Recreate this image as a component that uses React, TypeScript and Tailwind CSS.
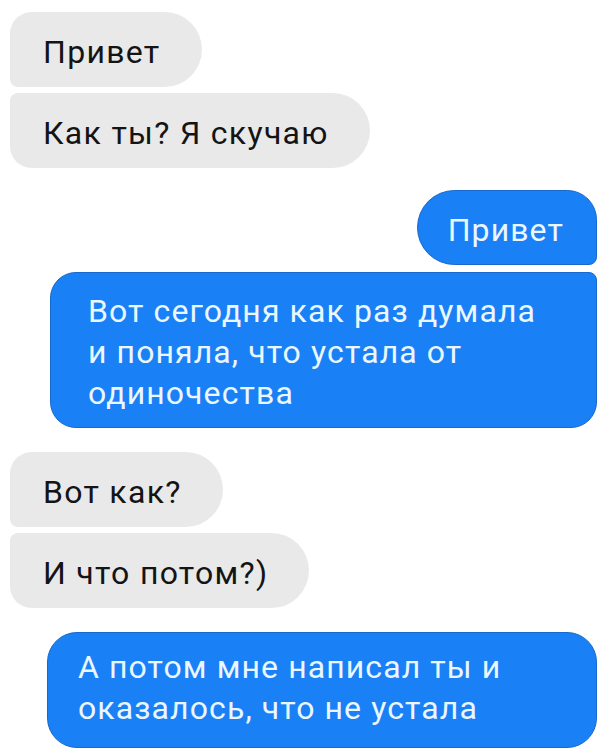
import * as React from "react";

function Incoming({ text, className }: { text: string; className: string }) {
    return (
        <div
            className={`flex h-[75px] w-fit items-center bg-[#e9e9e9] pt-[5px] pl-[33px] pr-[41px] text-[32px] tracking-[1.3px] text-[#141414] ${className}`}
        >
            {text}
        </div>
    );
}

export default function App() {
    return (
        <div className="flex h-[751px] w-[601px] flex-col bg-white px-[10px] pt-[12px] font-['Roboto',sans-serif] leading-none">
            <Incoming text="Привет" className="rounded-l-[22px] rounded-bl-[8px] rounded-r-[38px]" />
            <Incoming
                text="Как ты? Я скучаю"
                className="mt-[6px] rounded-l-[22px] rounded-tl-[8px] rounded-r-[38px]"
            />

            <div className="mt-[22px] mr-[-6px] flex h-[75px] w-fit items-center self-end rounded-l-[38px] rounded-tr-[30px] rounded-br-[8px] border border-[#1769cc] bg-[#1a80f6] pt-[4px] pl-[30px] pr-[32px] text-[32px] tracking-[1.1px] text-[#eaf7ff]">
                Привет
            </div>
            <div className="mt-[7px] mr-[-6px] ml-[40px] flex flex-col rounded-[26px] rounded-tr-[8px] border border-[#1769cc] bg-[#1a80f6] pt-[18px] pb-[13px] pl-[37px] pr-[20px] text-[32px] leading-[41px] tracking-[1.1px] text-[#eaf7ff]">
                <span>Вот сегодня как раз думала</span>
                <span>и поняла, что устала от</span>
                <span>одиночества</span>
            </div>

            <Incoming
                text="Вот как?"
                className="mt-[24px] rounded-l-[22px] rounded-bl-[8px] rounded-r-[38px]"
            />
            <Incoming
                text="И что потом?)"
                className="mt-[6px] rounded-l-[22px] rounded-tl-[8px] rounded-r-[38px]"
            />

            <div className="mt-[24px] mr-[-6px] ml-[37px] flex flex-col rounded-[30px] border border-[#1769cc] bg-[#1a80f6] pt-[14px] pb-[18px] pl-[30px] pr-[20px] text-[32px] leading-[41px] tracking-[1.1px] text-[#eaf7ff]">
                <span>А потом мне написал ты и</span>
                <span>оказалось, что не устала</span>
            </div>
        </div>
    );
}
